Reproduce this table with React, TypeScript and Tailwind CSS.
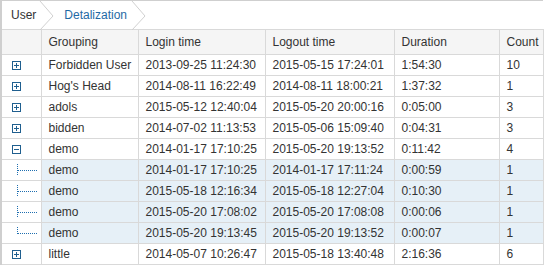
import React from "react";

type Row = {
  name: string;
  login: string;
  logout: string;
  duration: string;
  count: string;
  kind: "closed" | "open" | "child" | "lastChild";
};

const rows: Row[] = [
  { name: "Forbidden User", login: "2013-09-25 11:24:30", logout: "2015-05-15 17:24:01", duration: "1:54:30", count: "10", kind: "closed" },
  { name: "Hog's Head", login: "2014-08-11 16:22:49", logout: "2014-08-11 18:00:21", duration: "1:37:32", count: "1", kind: "closed" },
  { name: "adols", login: "2015-05-12 12:40:04", logout: "2015-05-20 20:00:16", duration: "0:05:00", count: "3", kind: "closed" },
  { name: "bidden", login: "2014-07-02 11:13:53", logout: "2015-05-06 15:09:40", duration: "0:04:31", count: "3", kind: "closed" },
  { name: "demo", login: "2014-01-17 17:10:25", logout: "2015-05-20 19:13:52", duration: "0:11:42", count: "4", kind: "open" },
  { name: "demo", login: "2014-01-17 17:10:25", logout: "2014-01-17 17:11:24", duration: "0:00:59", count: "1", kind: "child" },
  { name: "demo", login: "2015-05-18 12:16:34", logout: "2015-05-18 12:27:04", duration: "0:10:30", count: "1", kind: "child" },
  { name: "demo", login: "2015-05-20 17:08:02", logout: "2015-05-20 17:08:08", duration: "0:00:06", count: "1", kind: "child" },
  { name: "demo", login: "2015-05-20 19:13:45", logout: "2015-05-20 19:13:52", duration: "0:00:07", count: "1", kind: "lastChild" },
  { name: "little", login: "2014-05-07 10:26:47", logout: "2015-05-18 13:40:48", duration: "2:16:36", count: "6", kind: "closed" },
];

function Expander({ open }: { open: boolean }) {
  return (
    <svg width="9" height="9" viewBox="0 0 9 9" className="block">
      <rect x="0.5" y="0.5" width="8" height="8" fill="white" stroke="#1f5f8f" />
      <line x1="2" y1="4.5" x2="7" y2="4.5" stroke="#1f5f8f" />
      {!open && <line x1="4.5" y1="2" x2="4.5" y2="7" stroke="#1f5f8f" />}
    </svg>
  );
}

function TreeLine({ last }: { last: boolean }) {
  return (
    <svg width="24" height="20" viewBox="0 0 24 20" className="block">
      <line x1="1.5" y1="4" x2="1.5" y2={last ? 11 : 16} stroke="#1f6fb0" strokeDasharray="1 1" />
      <line x1="2" y1="10.5" x2="22" y2="10.5" stroke="#1f6fb0" strokeDasharray="1 1" />
    </svg>
  );
}

function Chevron() {
  return (
    <svg width="15" height="29" viewBox="0 0 15 29" className="block">
      <polyline points="1,0 14,15 1,29" fill="none" stroke="#d0d0d0" />
    </svg>
  );
}

export default function App() {
  const cell = "border border-[#d9d9d9] px-[7px] h-[21px] leading-[20px] whitespace-nowrap";
  return (
    <div className="w-[543px] border-l-2 border-t border-[#cfcfcf] bg-white text-[12px] text-[#333]" style={{ fontFamily: "'Liberation Sans', Arial, sans-serif" }}>
      <div className="h-[28px] flex items-center">
        <span className="pl-[9px] pr-[3px]">User</span>
        <Chevron />
        <span className="pl-[10px] pr-[4px] text-[#1f6aa5]">Detalization</span>
        <Chevron />
      </div>
      <table className="table-fixed border-collapse w-[541px]">
        <colgroup>
          <col className="w-[39px]" />
          <col className="w-[97px]" />
          <col className="w-[127px]" />
          <col className="w-[129px]" />
          <col className="w-[105px]" />
          <col className="w-[44px]" />
        </colgroup>
        <thead>
          <tr className="bg-[#f5f5f5]">
            <th className="border border-[#d9d9d9] border-l-0 h-[25px]" />
            {["Grouping", "Login time", "Logout time", "Duration", "Count"].map((h) => (
              <th key={h} className="border border-[#d9d9d9] px-[7px] h-[25px] text-left font-normal">
                {h}
              </th>
            ))}
          </tr>
        </thead>
        <tbody>
          {rows.map((r, i) => {
            const child = r.kind === "child" || r.kind === "lastChild";
            const bg = child ? "bg-[#e6f0f7]" : "bg-white";
            return (
              <tr key={i}>
                <td className="border border-[#d9d9d9] border-l-0 h-[21px] bg-white p-0">
                  {child ? (
                    <div className="pl-[14px]">
                      <TreeLine last={r.kind === "lastChild"} />
                    </div>
                  ) : (
                    <div className="pl-[10px]">
                      <Expander open={r.kind === "open"} />
                    </div>
                  )}
                </td>
                <td className={`${cell} ${bg}`}>{r.name}</td>
                <td className={`${cell} ${bg}`}>{r.login}</td>
                <td className={`${cell} ${bg}`}>{r.logout}</td>
                <td className={`${cell} ${bg}`}>{r.duration}</td>
                <td className={`${cell} ${bg}`}>{r.count}</td>
              </tr>
            );
          })}
        </tbody>
      </table>
    </div>
  );
}
